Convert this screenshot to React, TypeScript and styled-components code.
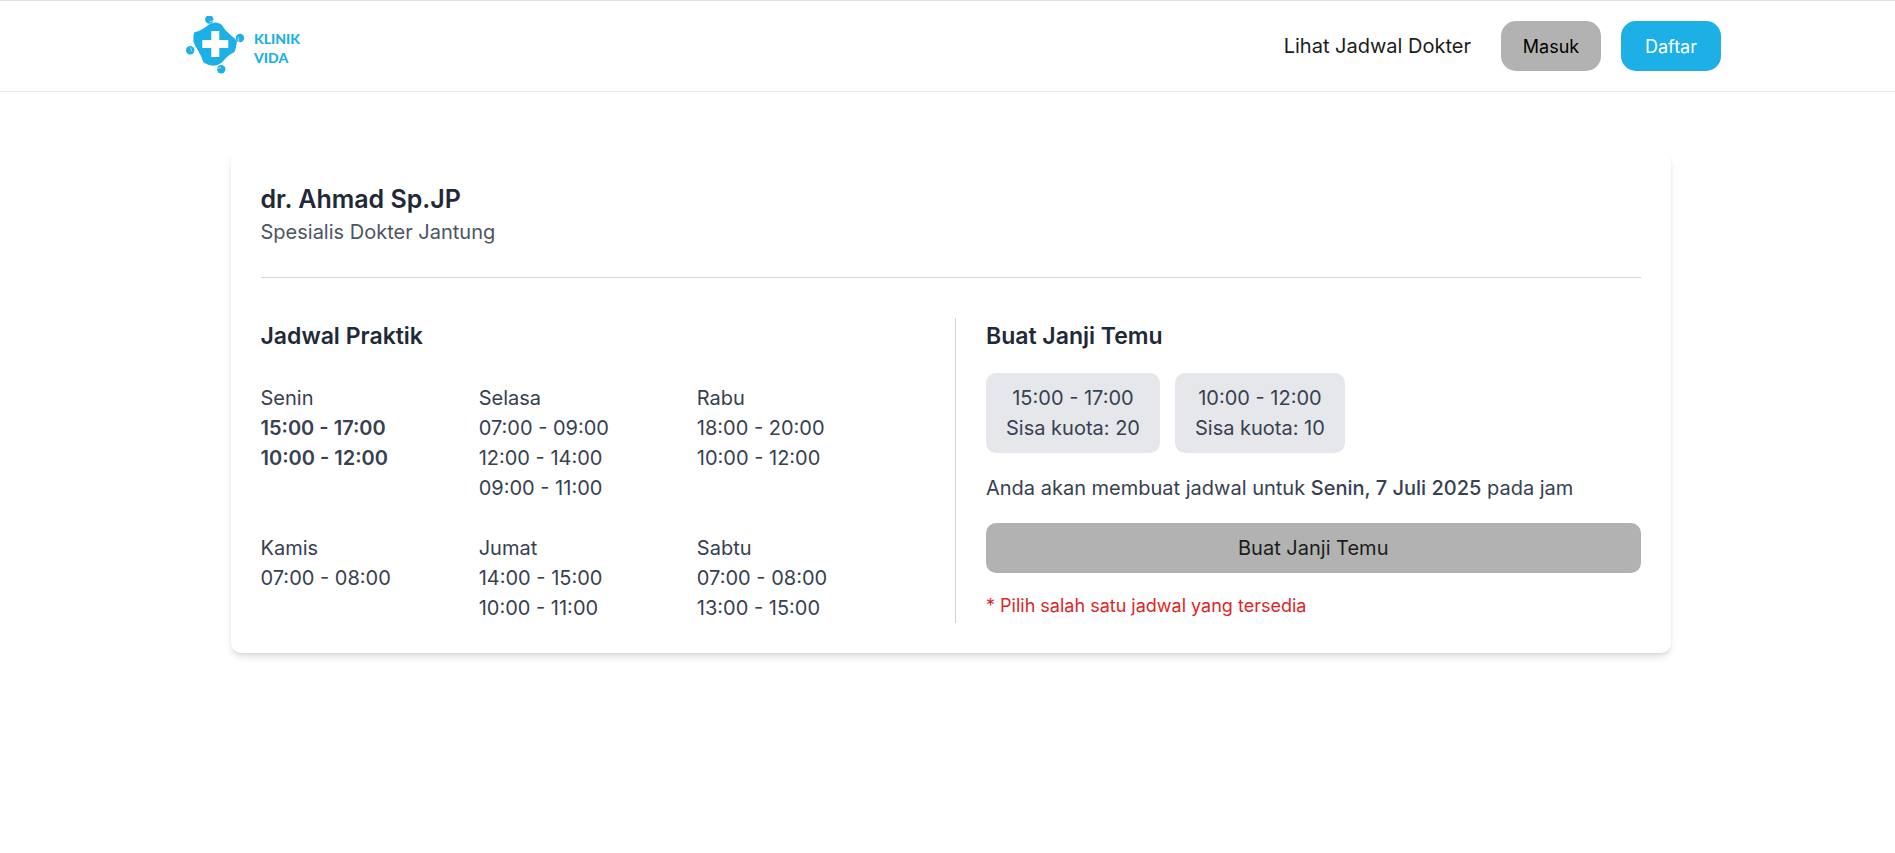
import React from "react";
import styled, { createGlobalStyle } from "styled-components";

const GlobalStyle = createGlobalStyle`
  *, *::before, *::after { box-sizing: border-box; }
  body {
    margin: 0;
    background: #fff;
    color: #1c1c1c;
    font-family: Inter, "Liberation Sans", sans-serif;
    font-size: 20px;
    line-height: 30px;
  }
  h1, h2, h3, p, ul { margin: 0; padding: 0; }
  button { font: inherit; border: 0; cursor: pointer; }
`;

const Header = styled.header`
  padding-left: 7px;
  border-top: 1px solid #e7e0e3;
  border-bottom: 1px solid #e5e7eb;
`;

const HeaderInner = styled.div`
  display: flex;
  align-items: center;
  justify-content: space-between;
  max-width: 1600px;
  min-height: 90px;
  margin: 0 auto;
  padding: 0 30px;
`;

const Brand = styled.a`
  display: flex;
  align-items: center;
  gap: 9px;
  padding-left: 4px;
  color: #1cb0e6;
  text-decoration: none;
`;

const BrandName = styled.span`
  display: flex;
  flex-direction: column;
  padding-top: 4px;
  font-family: Lato, Inter, sans-serif;
  font-size: 14px;
  font-weight: 900;
  line-height: 19px;
`;

const Nav = styled.nav`
  display: flex;
  align-items: center;
  gap: 20px;
`;

const NavLink = styled.a`
  padding-right: 10px;
  color: #1c1c1c;
  text-decoration: none;
`;

const NavButton = styled.button<{ $primary?: boolean }>`
  width: 100px;
  height: 50px;
  padding: 2px 0 0;
  border-radius: 15px;
  font-size: 18px;
  background: ${(p) => (p.$primary ? "#1cb0e6" : "#b2b2b2")};
  color: ${(p) => (p.$primary ? "#fff" : "#000")};
`;

const Main = styled.main`
  padding: 60px 0 60px 6px;
`;

const Card = styled.article`
  max-width: 1440px;
  margin: 0 auto;
  padding: 30px;
  border-radius: 10px;
  background: #fff;
  box-shadow: 0 5px 8px -1px rgba(0, 0, 0, 0.1), 0 3px 5px -2px rgba(0, 0, 0, 0.1);
`;

const CardHeader = styled.div`
  padding-bottom: 30px;
  border-bottom: 1px solid #d1d5db;
`;

const DoctorName = styled.h1`
  color: #1f2937;
  font-size: 25px;
  font-weight: 600;
  line-height: 35px;
`;

const Specialty = styled.p`
  color: #4b5563;
`;

const Columns = styled.div`
  display: flex;
  gap: 40px;
  margin-top: 40px;
  color: #374151;
`;

const Schedule = styled.section`
  flex: 1 1 0;
  min-width: 0;
`;

const Booking = styled.section`
  display: flex;
  flex: 1 1 0;
  flex-direction: column;
  align-items: stretch;
  gap: 20px;
  min-width: 0;
  padding-left: 30px;
  border-left: 1px solid #d1d5db;
`;

const SectionTitle = styled.h2`
  padding-top: 1px;
  color: #1f2937;
  font-size: 23px;
  font-weight: 600;
  line-height: 34px;
`;

const DayGrid = styled.div`
  display: grid;
  grid-template-columns: repeat(3, 1fr);
  row-gap: 30px;
  margin-top: 30px;
`;

const DayName = styled.h3`
  font-size: 20px;
  font-weight: 400;
`;

const Hours = styled.ul<{ $selected?: boolean }>`
  list-style: none;
  font-weight: ${(p) => (p.$selected ? 600 : 400)};
`;

const Slots = styled.div`
  display: flex;
  flex-wrap: wrap;
  gap: 15px;
`;

const SlotButton = styled.button`
  display: flex;
  flex-direction: column;
  align-items: center;
  padding: 10px 20px;
  border-radius: 10px;
  background: #e5e7eb;
  color: #374151;
`;

const Summary = styled.p`
  strong { font-weight: 500; }
`;

const SubmitButton = styled.button`
  padding: 10px 20px;
  border-radius: 10px;
  background: #b2b2b2;
  color: #1c1c1c;
`;

const Notice = styled.p`
  color: #dc2626;
  font-size: 18px;
  line-height: 25px;
`;

const days = [
  { name: "Senin", hours: ["15:00 - 17:00", "10:00 - 12:00"], selected: true },
  { name: "Selasa", hours: ["07:00 - 09:00", "12:00 - 14:00", "09:00 - 11:00"] },
  { name: "Rabu", hours: ["18:00 - 20:00", "10:00 - 12:00"] },
  { name: "Kamis", hours: ["07:00 - 08:00"] },
  { name: "Jumat", hours: ["14:00 - 15:00", "10:00 - 11:00"] },
  { name: "Sabtu", hours: ["07:00 - 08:00", "13:00 - 15:00"] },
];

const slots = [
  { time: "15:00 - 17:00", quota: 20 },
  { time: "10:00 - 12:00", quota: 10 },
];

const LogoMark = () => (
  <svg width="60" height="60" viewBox="0 0 60 60" fill="#1cb0e6" aria-hidden="true">
    <path d="M9 16.500Q17 14.500 24 8.500Q30 4.500 36.500 8.500Q40 14.500 45 18.500Q49 21.500 52 25Q51.500 31 49.500 36Q44 38.500 40.500 42.500Q37.500 46.500 34 48.500Q26.500 51.500 18.500 46.500Q16.500 40 13 34.500Q10 30 8.500 26Q8 21 9 16.500Z" />
    <path d="M26.300 15h8v9h9v8h-9v9h-8v-9h-9v-8h9z" fill="#fff" />
    <circle cx="24.300" cy="3.500" r="4.200" />
    <circle cx="55" cy="22" r="4.200" />
    <circle cx="36.200" cy="53.300" r="4.200" />
    <circle cx="5.200" cy="34.300" r="4.200" />
    <path
      d="M24.500 6l4.500-1.500M53 21l1 5M36 51.500l-4.500 1M7 35.500l-1.500-4"
      fill="none"
      stroke="#fff"
      strokeOpacity="0.6"
      strokeWidth="1"
    />
  </svg>
);

export default function App() {
  return (
    <>
      <GlobalStyle />
      <Header>
        <HeaderInner>
          <Brand href="#" aria-label="Klinik Vida">
            <LogoMark />
            <BrandName>
              <span>KLINIK</span>
              <span>VIDA</span>
            </BrandName>
          </Brand>
          <Nav>
            <NavLink href="#jadwal">Lihat Jadwal Dokter</NavLink>
            <NavButton type="button">Masuk</NavButton>
            <NavButton type="button" $primary>Daftar</NavButton>
          </Nav>
        </HeaderInner>
      </Header>
      <Main>
        <Card>
          <CardHeader>
            <DoctorName>dr. Ahmad Sp.JP</DoctorName>
            <Specialty>Spesialis Dokter Jantung</Specialty>
          </CardHeader>
          <Columns>
            <Schedule id="jadwal">
              <SectionTitle>Jadwal Praktik</SectionTitle>
              <DayGrid>
                {days.map((day) => (
                  <div key={day.name}>
                    <DayName>{day.name}</DayName>
                    <Hours $selected={day.selected}>
                      {day.hours.map((hour) => (
                        <li key={hour}>{hour}</li>
                      ))}
                    </Hours>
                  </div>
                ))}
              </DayGrid>
            </Schedule>
            <Booking>
              <SectionTitle>Buat Janji Temu</SectionTitle>
              <Slots>
                {slots.map((slot) => (
                  <SlotButton type="button" key={slot.time}>
                    <span>{slot.time}</span>
                    <span>Sisa kuota: {slot.quota}</span>
                  </SlotButton>
                ))}
              </Slots>
              <Summary>
                Anda akan membuat jadwal untuk <strong>Senin, 7 Juli 2025</strong> pada jam
              </Summary>
              <SubmitButton type="button">Buat Janji Temu</SubmitButton>
              <Notice>* Pilih salah satu jadwal yang tersedia</Notice>
            </Booking>
          </Columns>
        </Card>
      </Main>
    </>
  );
}
